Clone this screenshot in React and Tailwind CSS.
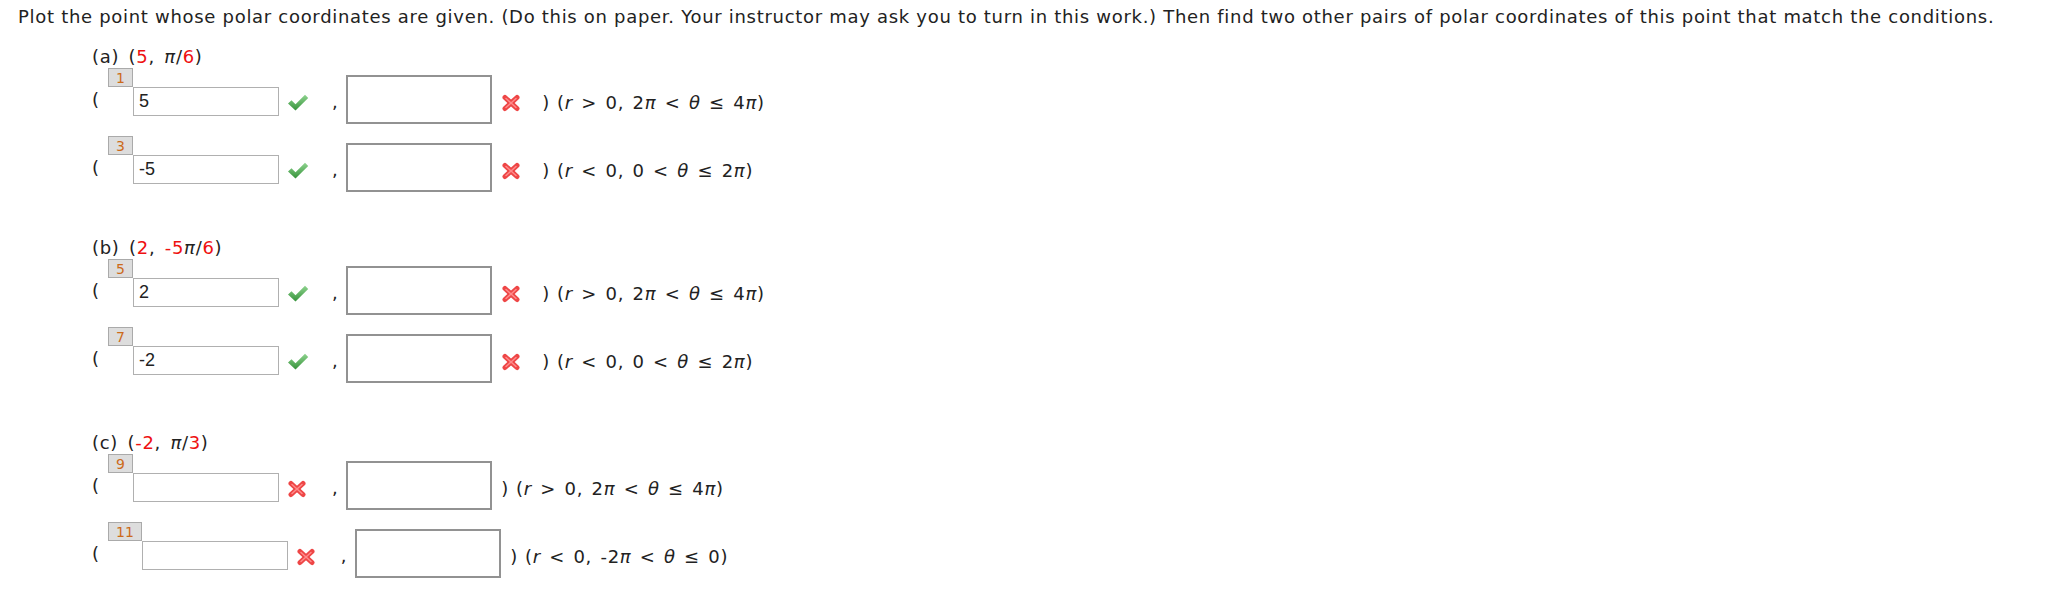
const font = { fontFamily: '"DejaVu Sans", Verdana, sans-serif' }

function Pi() {
    return <i>π</i>
}

function Red({ children }) {
    return <span className="text-[#ee1111]">{children}</span>
}

function Check() {
    return (
        <svg width="23" height="19" viewBox="0 0 22 18">
            <defs>
                <linearGradient id="chk" x1="0" y1="0" x2="0" y2="1">
                    <stop offset="0" stopColor="#8fd48f" />
                    <stop offset="1" stopColor="#35923a" />
                </linearGradient>
            </defs>
            <polygon points="1,10 4.5,6.8 8.5,10.8 18,1.3 21.2,4.5 8.5,17" fill="url(#chk)" />
        </svg>
    )
}

function Cross() {
    return (
        <svg width="20" height="18" viewBox="0 0 20 18">
            <g stroke="#ee4646" strokeWidth="5" strokeLinecap="round">
                <line x1="4" y1="3.5" x2="16" y2="14.5" />
                <line x1="16" y1="3.5" x2="4" y2="14.5" />
            </g>
            <g stroke="#ff8a8a" strokeWidth="1.5" strokeLinecap="round">
                <line x1="5" y1="4.5" x2="15" y2="13.5" />
                <line x1="15" y1="4.5" x2="5" y2="13.5" />
            </g>
        </svg>
    )
}

function Cond({ kind }) {
    if (kind === 'pos')
        return <span>(<i>r</i> &gt; 0, 2<Pi /> &lt; <i>θ</i> ≤ 4<Pi />)</span>
    if (kind === 'neg')
        return <span>(<i>r</i> &lt; 0, 0 &lt; <i>θ</i> ≤ 2<Pi />)</span>
    return <span>(<i>r</i> &lt; 0, -2<Pi /> &lt; <i>θ</i> ≤ 0)</span>
}

function Row({ badge, value, first, second, cond }) {
    return (
        <div className="flex items-center h-[49px]">
            <span className="w-[16px]">(</span>
            <div className="flex items-start mt-[4px] tracking-normal">
                <div className="-mt-[19px] h-[19px] px-[7px] flex items-center bg-[#dddddd] border border-[#aaaaaa] text-[#cc6a1a] text-[14px] leading-none">
                    {badge}
                </div>
                <div
                    className="w-[146px] h-[29px] border border-[#b0b0b0] bg-white pl-[5px] text-[18px] leading-[27px] text-[#222]"
                    style={{ fontFamily: '"Liberation Sans", Arial, sans-serif' }}
                >
                    {value}
                </div>
            </div>
            <span className="ml-[8px] mt-[6px] flex w-[22px]">
                {first === 'check' ? <Check /> : <Cross />}
            </span>
            <span className="ml-[23px] mt-[4px]">,</span>
            <div className="ml-[8px] w-[146px] h-[49px] border-2 border-[#929292] bg-white" />
            {second === 'x' && (
                <span className="ml-[9px] mt-[6px] flex">
                    <Cross />
                </span>
            )}
            <span className={second === 'x' ? 'ml-[21px] mt-[6px]' : 'ml-[9px] mt-[6px]'}>)</span>
            <span className="ml-[7px] mt-[6px] [word-spacing:2px]">
                <Cond kind={cond} />
            </span>
        </div>
    )
}

function Part({ label, rows, className }) {
    return (
        <div className={className}>
            <div className="h-[20px] leading-[20px] [word-spacing:3px]">{label}</div>
            <div className="mt-[8px] flex flex-col gap-[19px]">
                {rows.map(r => (
                    <Row key={r.badge} {...r} />
                ))}
            </div>
        </div>
    )
}

export default function App() {
    return (
        <div
            className="min-h-screen bg-white text-[#222] text-[18px] tracking-[0.7px] pl-[18px] pt-[6px]"
            style={font}
        >
            <p className="leading-[22px]">
                Plot the point whose polar coordinates are given. (Do this on paper. Your instructor may ask you
                to turn in this work.) Then find two other pairs of polar coordinates of this point that match the
                conditions.
            </p>

            <div className="mt-[19px] flex flex-col gap-[46px]">
                <Part
                    className="ml-[74px]"
                    label={<>(a) (<Red>5</Red>, <Pi />/<Red>6</Red>)</>}
                    rows={[
                        { badge: '1', value: '5', first: 'check', second: 'x', cond: 'pos' },
                        { badge: '3', value: '-5', first: 'check', second: 'x', cond: 'neg' },
                    ]}
                />
                <Part
                    className="ml-[74px]"
                    label={<>(b) (<Red>2</Red>, <Red>-5</Red><Pi />/<Red>6</Red>)</>}
                    rows={[
                        { badge: '5', value: '2', first: 'check', second: 'x', cond: 'pos' },
                        { badge: '7', value: '-2', first: 'check', second: 'x', cond: 'neg' },
                    ]}
                />
                <Part
                    className="ml-[74px] mt-[4px]"
                    label={<>(c) (<Red>-2</Red>, <Pi />/<Red>3</Red>)</>}
                    rows={[
                        { badge: '9', value: '', first: 'x', second: null, cond: 'pos' },
                        { badge: '11', value: '', first: 'x', second: null, cond: 'neg0' },
                    ]}
                />
            </div>
        </div>
    )
}
